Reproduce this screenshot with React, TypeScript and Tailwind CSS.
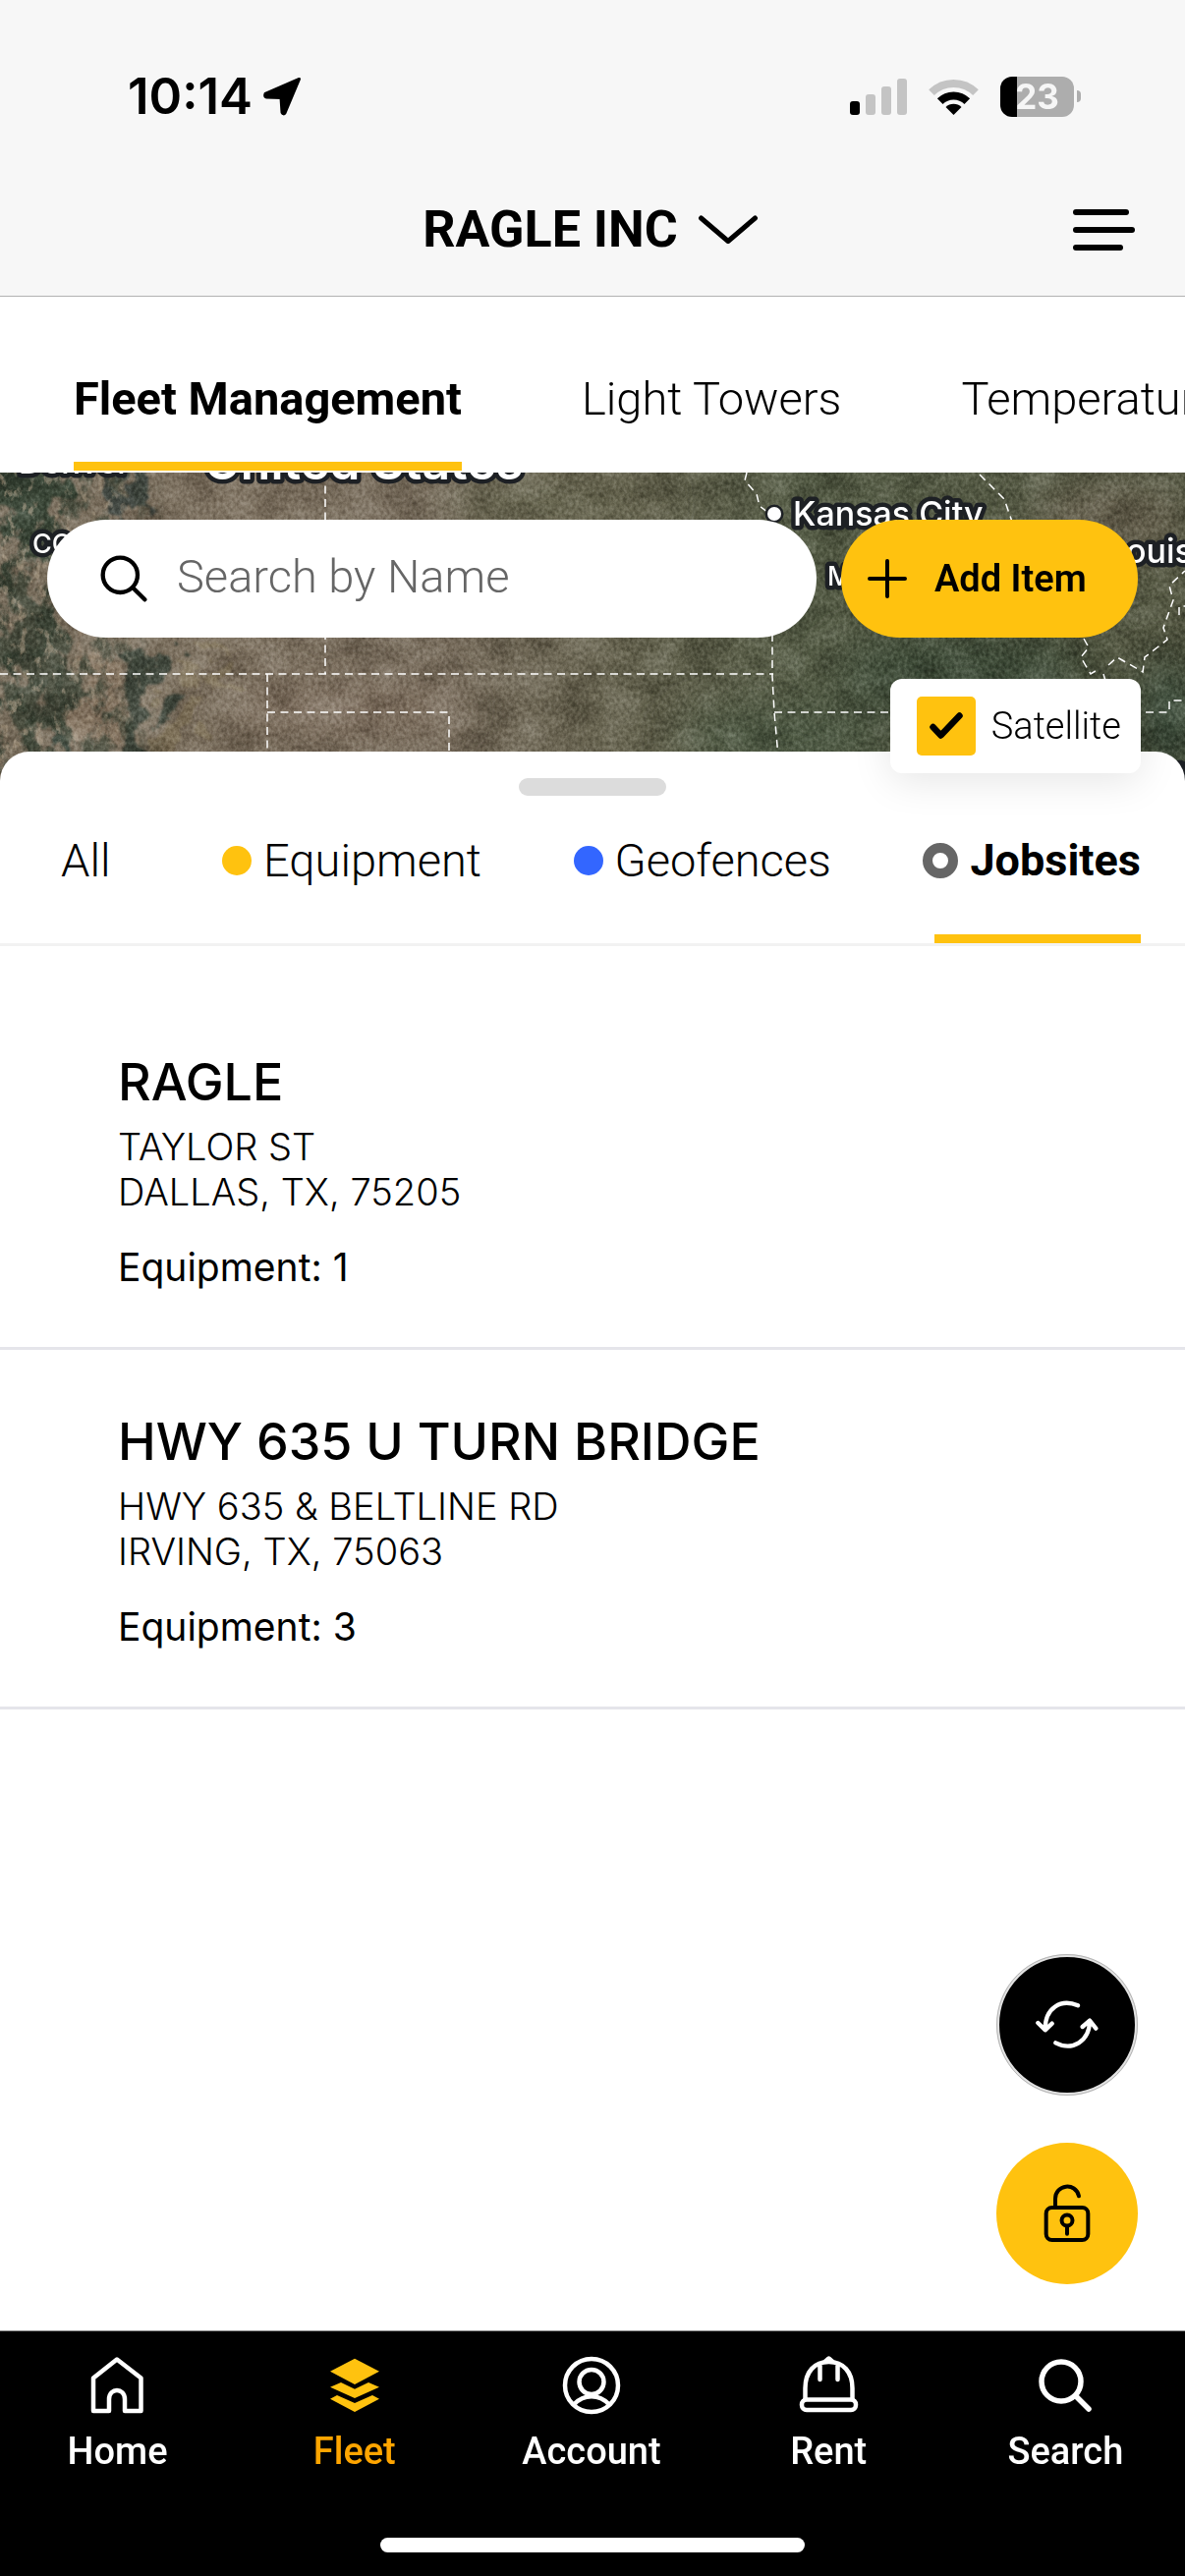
import React, { useState } from "react";

const ui = "font-[Roboto,'Liberation_Sans',sans-serif]";
const sys = "font-[Inter,'Liberation_Sans',sans-serif]";

function StatusBar() {
  return (
    <div className={`${sys} flex items-center justify-between pt-[68px] pb-[34px] pl-[130px] pr-[106px]`}>
      <div className="flex h-[60px] items-center gap-2.5">
        <span className="text-[51px] leading-[60px] font-semibold">10:14</span>
        <svg width="40" height="40" viewBox="0 0 40 40" aria-label="Location in use">
          <path d="M37.5 2.5 L3 17.5 Q2 20 4 21 L19 21.5 L20 36.5 Q21.500 39 23 37 Z" stroke="#000" strokeWidth="3" strokeLinejoin="round" />
        </svg>
      </div>
      <div className="flex items-center gap-[22px]">
        <svg width="58" height="37" viewBox="0 0 58 37" aria-label="Signal">
          <rect x="0" y="23" width="10" height="14" rx="3" fill="#000" />
          <rect x="16" y="16" width="10" height="21" rx="3" fill="#c4c4c4" />
          <rect x="32" y="8" width="10" height="29" rx="3" fill="#c4c4c4" />
          <rect x="48" y="0" width="10" height="37" rx="3" fill="#c4c4c4" />
        </svg>
        <svg width="51" height="37" viewBox="0 0 51 37" fill="none" aria-label="Wi-Fi">
          <path d="M3 14.200 A32 32 0 0 1 48 14.200" stroke="#c4c4c4" strokeWidth="8" />
          <path d="M11.700 23.200 A19.500 19.500 0 0 1 39.300 23.200" stroke="#000" strokeWidth="8" />
          <path d="M25.500 37 L17.500 29 A11.300 11.300 0 0 1 33.500 29 Z" fill="#000" />
        </svg>
        <div className="flex items-center gap-[3px]">
          <div className="flex h-[41px] w-[75px] items-center justify-center rounded-xl bg-[linear-gradient(90deg,#000_17px,#adadad_17px)]">
            <span className="text-[35px] leading-none font-bold text-[#f6f6f6]">23</span>
          </div>
          <div className="h-3 w-1 rounded-r-full bg-[#adadad]" />
        </div>
      </div>
    </div>
  );
}

function Header() {
  return (
    <header className="border-b border-[#b2b2b2] bg-[#f7f7f7]">
      <StatusBar />
      <div className="grid h-[139px] grid-cols-[1fr_auto_1fr] items-center px-[51px] pt-1">
        <span />
        <button className="flex items-center gap-5 pr-1">
          <span className="text-[52px] leading-[64px] font-bold">RAGLE INC</span>
          <svg width="62" height="32" viewBox="0 0 62 32" fill="none" aria-hidden="true">
            <path d="M3.500 4 L31 27.500 L58.500 4" stroke="#000" strokeWidth="5" strokeLinecap="round" strokeLinejoin="round" />
          </svg>
        </button>
        <button aria-label="Menu" className="flex flex-col gap-3 justify-self-end">
          <span className="h-1.5 w-[57px] rounded-full bg-black" />
          <span className="h-1.5 w-[63px] rounded-full bg-black" />
          <span className="h-1.5 w-[51px] rounded-full bg-black" />
        </button>
      </div>
    </header>
  );
}

function SectionTabs() {
  const tabs = ["Fleet Management", "Light Towers", "Temperature Control"];
  return (
    <nav className="flex h-[179px] gap-[122px] overflow-hidden bg-white pt-10 pb-0.5 pl-[75px] whitespace-nowrap">
      {tabs.map((tab, i) => (
        <button
          key={tab}
          className={
            i === 0
              ? "shrink-0 border-b-9 border-[#ffc20f] text-[47px] font-bold"
              : "shrink-0 border-b-9 border-transparent text-[47px] font-light"
          }
        >
          {tab}
        </button>
      ))}
    </nav>
  );
}

function Terrain() {
  return (
    <svg className="absolute inset-0 h-full w-full" viewBox="0 0 1206 314" preserveAspectRatio="xMinYMin slice" aria-hidden="true">
      <defs>
        <linearGradient id="land">
          <stop offset="0" stopColor="#7a6f5e" />
          <stop offset="0.2" stopColor="#7d7160" />
          <stop offset="0.38" stopColor="#776c5c" />
          <stop offset="0.52" stopColor="#676450" />
          <stop offset="0.68" stopColor="#555c46" />
          <stop offset="1" stopColor="#545742" />
        </linearGradient>
        <filter id="rough" x="-20%" y="-20%" width="140%" height="140%" colorInterpolationFilters="sRGB">
          <feTurbulence type="fractalNoise" baseFrequency="0.03" numOctaves="6" seed="4" />
          <feDisplacementMap in="SourceGraphic" scale="90" xChannelSelector="R" yChannelSelector="G" />
          <feGaussianBlur stdDeviation="1.2" />
        </filter>
        <filter id="soft" x="-30%" y="-30%" width="160%" height="160%" colorInterpolationFilters="sRGB">
          <feGaussianBlur stdDeviation="22" />
        </filter>
        <filter id="hills" x="0" y="0" width="100%" height="100%" colorInterpolationFilters="sRGB">
          <feTurbulence type="fractalNoise" baseFrequency="0.023 0.031" numOctaves="6" seed="9" />
          <feColorMatrix values="1.500 0 0 0 -0.250  1.500 0 0 0 -0.250  1.500 0 0 0 -0.250  0 0 0 0 0.350" />
        </filter>
        <filter id="fields" x="0" y="0" width="100%" height="100%" colorInterpolationFilters="sRGB">
          <feTurbulence type="fractalNoise" baseFrequency="0.29 0.23" numOctaves="3" seed="31" />
          <feColorMatrix values="0 1.600 0 0 -0.300  0 1.600 0 0 -0.300  0 1.600 0 0 -0.300  0 0 0 0 0.350" />
        </filter>
        <filter id="rock" x="0" y="0" width="100%" height="100%" colorInterpolationFilters="sRGB">
          <feTurbulence type="fractalNoise" baseFrequency="0.053 0.041" numOctaves="6" seed="21" />
          <feColorMatrix values="0 0 0 0 0.220  0 0 0 0 0.255  0 0 0 0 0.200  5 0 0 0 -2.400" />
        </filter>
        <filter id="snow" x="0" y="0" width="100%" height="100%" colorInterpolationFilters="sRGB">
          <feTurbulence type="fractalNoise" baseFrequency="0.110 0.070" numOctaves="5" seed="63" />
          <feColorMatrix values="0 0 0 0 0.700  0 0 0 0 0.640  0 0 0 0 0.550  0 7 0 0 -4.100" />
        </filter>
        <linearGradient id="fade">
          <stop offset="0" stopColor="#fff" />
          <stop offset="0.7" stopColor="#fff" stopOpacity="0.6" />
          <stop offset="1" stopColor="#fff" stopOpacity="0" />
        </linearGradient>
        <mask id="west">
          <rect width="170" height="314" fill="url(#fade)" />
        </mask>
      </defs>
      <rect width="1206" height="314" fill="url(#land)" />
      <g filter="url(#soft)">
        <ellipse cx="980" cy="205" rx="130" ry="45" fill="#3f4c39" />
        <ellipse cx="800" cy="270" rx="110" ry="30" fill="#4b5742" />
        <ellipse cx="1130" cy="50" rx="80" ry="40" fill="#66604e" />
        <ellipse cx="1190" cy="250" rx="30" ry="60" fill="#374838" />
        <ellipse cx="560" cy="30" rx="110" ry="30" fill="#66654f" />
        <ellipse cx="350" cy="240" rx="120" ry="30" fill="#7f7060" />
      </g>
      <g filter="url(#rough)">
        <path d="M0 0 H50 L60 40 L30 80 L0 90 Z" fill="#3b4738" />
        <path d="M115 0 H140 L155 50 L140 55 Z" fill="#434943" />
        <path d="M0 120 L30 110 L70 160 L75 220 L90 250 L60 260 L20 240 L0 200 Z" fill="#4b4f40" />
        <path d="M130 170 H165 L183 210 L155 240 L145 300 L110 310 L118 250 Z" fill="#3f463b" />
        <path d="M35 280 L60 270 L85 300 H35 Z" fill="#38443a" />
        <path d="M90 175 L112 180 L108 265 L75 285 L85 240 Z" fill="#8c7c69" />
        <path d="M180 175 L230 190 L250 205 L200 205 Z" fill="#867961" />
        <path d="M160 270 L185 225 L215 225 L180 300 Z" fill="#82755d" />
      </g>
      <rect width="170" height="314" filter="url(#rock)" mask="url(#west)" />
      <rect width="170" height="314" filter="url(#snow)" mask="url(#west)" opacity="0.600" />
      <rect width="1206" height="314" filter="url(#hills)" className="mix-blend-soft-light" />
      <rect width="1206" height="314" filter="url(#fields)" className="mix-blend-soft-light" />
      <g fill="none" stroke="#fff" strokeWidth="1.500" strokeDasharray="8 5.500">
        <path d="M0 205 H787" />
        <path d="M331 0 V205" />
        <path d="M272 205 V314" />
        <path d="M272 244 H457 V314" />
        <path d="M760 0 L758 8 L770 22 L773 34 L786 44 V207 L788 244 L793 300" />
        <path d="M788 244 H1190 V232 H1206" />
        <path d="M997 2 L1022 27 L1030 50" />
        <path d="M1103 169 L1108 178 L1100 188 L1110 205 L1118 200 M1123 205 L1126 215 M1128 196 L1137 188 L1163 203 L1165 188 L1188 170 L1184 158 L1194 130 L1190 115 L1206 100" />
        <path d="M1200 145 V136 H1206" />
      </g>
      <g className={sys} fill="#fff" stroke="#1d2024" strokeWidth="9" strokeLinejoin="round" paintOrder="stroke">
        <text x="208" y="7" fontSize="50" fontWeight="600">United States</text>
        <text x="19" y="1" fontSize="33" fontWeight="500">Denver</text>
        <text x="33" y="82" fontSize="27" fontWeight="500">CO</text>
        <text x="807" y="54" fontSize="34" fontWeight="500">Kansas City</text>
        <text x="842" y="115" fontSize="27" fontWeight="500">M</text>
        <text x="1146" y="92" fontSize="34" fontWeight="500">ouis</text>
        <circle cx="788" cy="42" r="7" strokeWidth="5" />
        <circle cx="1200" cy="304" r="7" fill="#1d2024" />
      </g>
    </svg>
  );
}

function MapPanel() {
  const [satellite, setSatellite] = useState(true);
  return (
    <section className="relative flex flex-col px-12 pt-12 pb-2">
      <Terrain />
      <div className="relative flex gap-[25px]">
        <label className="flex h-[120px] min-w-0 flex-1 items-center gap-[30px] rounded-full bg-white pr-8 pl-[54px]">
          <svg width="48" height="48" viewBox="306 261 144 144" fill="none" stroke="#000" strokeLinecap="round" className="shrink-0" aria-hidden="true">
            <circle cx="367" cy="322" r="53" strokeWidth="13" />
            <path d="M408 363 L442 397" strokeWidth="13" />
          </svg>
          <input
            type="text"
            aria-label="Search by Name"
            placeholder="Search by Name"
            className="w-full min-w-0 bg-transparent pb-1 text-[47px] font-light outline-none placeholder:text-[#666666] placeholder:opacity-100"
          />
        </label>
        <button className="flex h-[120px] w-[302px] items-center gap-7 rounded-full bg-[#ffc20f] pl-[27px]">
          <svg width="40" height="40" viewBox="0 0 40 40" stroke="#000" strokeWidth="4" strokeLinecap="round" aria-hidden="true">
            <path d="M20 2 V38 M2 20 H38" />
          </svg>
          <span className="text-[38px] font-semibold">Add Item</span>
        </button>
      </div>
      <label className="relative z-20 mt-[42px] -mr-[3px] flex h-24 items-center gap-4 self-end rounded-xl bg-white pr-5 pl-[27px] shadow-[0_8px_40px_rgba(0,0,0,0.1)]">
        <span className="relative flex h-[60px] w-[60px] items-center justify-center">
          <input
            type="checkbox"
            checked={satellite}
            onChange={(e) => setSatellite(e.target.checked)}
            className="absolute inset-0 appearance-none rounded-[5px] bg-gray-300 checked:bg-[#ffc20f]"
          />
          {satellite && (
            <svg width="34" height="28" viewBox="0 0 34 28" fill="none" className="pointer-events-none relative" aria-hidden="true">
              <path d="M3.500 15 L11.500 23.500 L30.500 3.500" stroke="#000" strokeWidth="6.500" strokeLinecap="round" strokeLinejoin="round" />
            </svg>
          )}
        </span>
        <span className="text-[38px] font-light">Satellite</span>
      </label>
    </section>
  );
}

function SheetTabs() {
  return (
    <nav className="flex h-[153px] justify-between border-b-3 border-[#f2f2f2] pr-[45px] pb-[18px] pl-[62px] text-[47px] font-light">
      <button className="pr-5">All</button>
      <button className="flex items-center gap-3">
        <span className="h-[30px] w-[30px] rounded-full bg-[#ffc20f]" />
        Equipment
      </button>
      <button className="flex items-center gap-3">
        <span className="h-[30px] w-[30px] rounded-full bg-[#3366ff]" />
        Geofences
      </button>
      <button className="relative flex items-center gap-3 text-[45px] font-bold">
        <span className="h-9 w-9 rounded-full border-10 border-[#666666]" />
        Jobsites
        <span className="absolute right-0 -bottom-[18px] left-3 h-[9px] bg-[#ffc20f]" />
      </button>
    </nav>
  );
}

const jobsites = [
  { name: "RAGLE", street: "TAYLOR ST", city: "DALLAS, TX, 75205", equipment: 1 },
  { name: "HWY 635 U TURN BRIDGE", street: "HWY 635 & BELTLINE RD", city: "IRVING, TX, 75063", equipment: 3 },
];

function JobsiteList() {
  return (
    <ul className={`${sys} pt-[45px]`}>
      {jobsites.map((site) => (
        <li key={site.name} className="border-b-3 border-[#e5e5ea] px-[120px] pt-[62px] pb-[58px]">
          <h2 className="text-[52px] leading-[64px] font-medium">{site.name}</h2>
          <p className="mt-2.5 text-[38px] leading-[46px] font-light">
            {site.street}
            <br />
            {site.city}
          </p>
          <p className="mt-[31px] text-[39px] leading-[46px]">Equipment: {site.equipment}</p>
        </li>
      ))}
    </ul>
  );
}

function FloatingActions() {
  return (
    <div className="absolute right-12 bottom-[47px] flex flex-col gap-12">
      <button aria-label="Refresh" className="flex h-36 w-36 items-center justify-center rounded-full border-3 border-[#e2e2e2] bg-black outline-1 -outline-offset-1 outline-[#b5b5b5]">
        <svg width="64" height="50" viewBox="222 228 192 150" fill="none" stroke="#fff" strokeWidth="13" strokeLinecap="round" strokeLinejoin="round">
          <path d="M351 244 C300 222 250 250 251 318 M229 297 L251 319 L272 299" />
          <path d="M283 358 C334 384 386 354 387 292 M365 309 L387 290 L406 314" />
        </svg>
      </button>
      <button aria-label="Unlock" className="flex h-36 w-36 items-center justify-center rounded-full bg-[#ffc20f]">
        <svg width="48" height="60" viewBox="244 789 144 180" fill="none" stroke="#000" strokeWidth="12" strokeLinecap="round">
          <rect x="252" y="861" width="128" height="99" rx="18" />
          <path d="M280 858 V834 C280 790 342 782 352 826" />
          <circle cx="316" cy="900" r="16.500" />
          <path d="M316 918 V941" />
        </svg>
      </button>
    </div>
  );
}

const navItems: { label: string; active?: boolean; icon: React.ReactNode }[] = [
  {
    label: "Home",
    icon: <path d="M31 5.500 L7 24.500 V58 H23 V46 C23 34 39 34 39 46 V58 H55.500 V24.500 Z" />,
  },
  {
    label: "Fleet",
    active: true,
    icon: (
      <g fill="#ffc20f" stroke="none">
        <path d="M32 4.700 L57 17.700 L32 31 L7 17.700 Z" />
        <path d="M7 33.700 L18 29 L32 35.700 L46 29 L57 33.700 L32 45 Z" />
        <path d="M7 45.700 L14 42 L32 50 L50 42 L57 45.700 L32 59 Z" />
      </g>
    ),
  },
  {
    label: "Account",
    icon: (
      <>
        <circle cx="32" cy="32" r="27" />
        <circle cx="32" cy="28.500" r="12.500" />
        <path d="M14.500 51 C24 40.500 40 40.500 49.500 51" />
      </>
    ),
  },
  {
    label: "Rent",
    icon: (
      <>
        <rect x="5" y="46.500" width="55" height="10.500" rx="5" />
        <path d="M8.500 46 V35 C8.500 18 18 8 32.500 8 S56.500 18 56.500 35 V46 M28.500 8 L32.500 4.500 L36.500 8 M23.500 12 V26 M41.500 12 V26" />
      </>
    ),
  },
  {
    label: "Search",
    icon: (
      <g strokeWidth="5.500">
        <circle cx="28" cy="28" r="20" />
        <path d="M43 43 L56 56" />
      </g>
    ),
  },
];

function BottomNav() {
  return (
    <footer className="border-t border-[#8a8a8a] bg-black pt-[23px] pb-6 text-white">
      <nav className="grid grid-cols-5">
        {navItems.map((item) => (
          <a key={item.label} href={`#${item.label.toLowerCase()}`} className="flex flex-col items-center gap-[13px] pr-0.5">
            <svg width="64" height="64" viewBox="0 0 64 64" fill="none" stroke="#fff" strokeWidth="4.500" strokeLinecap="round" strokeLinejoin="round" aria-hidden="true">
              {item.icon}
            </svg>
            <span className={item.active ? "text-[38px] leading-[44px] font-medium text-[#ffa500]" : "text-[38px] leading-[44px] font-medium"}>
              {item.label}
            </span>
          </a>
        ))}
      </nav>
      <div className="mx-auto mt-[66px] h-[15px] w-[432px] rounded-full bg-white" />
    </footer>
  );
}

export default function App() {
  return (
    <div className={`${ui} flex min-h-screen flex-col bg-white text-black`}>
      <Header />
      <SectionTabs />
      <MapPanel />
      <main className="relative z-10 -mt-[30px] flex flex-1 flex-col rounded-t-[30px] bg-white pt-[27px] pb-[400px]">
        <div className="mx-auto h-[18px] w-[150px] rounded-[9px] bg-[#dcdcdc]" />
        <SheetTabs />
        <JobsiteList />
        <FloatingActions />
      </main>
      <BottomNav />
    </div>
  );
}
